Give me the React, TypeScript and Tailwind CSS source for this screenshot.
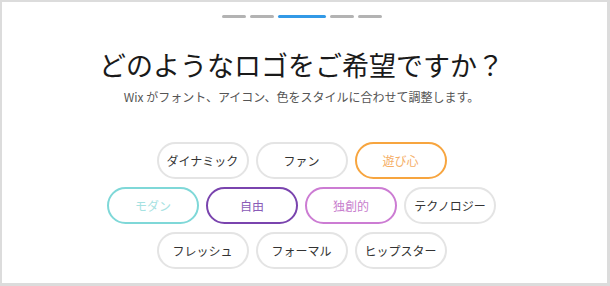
import React from "react";

type Tag = { label: string; cls: string };

const rows: Tag[][] = [
  [
    { label: "ダイナミック", cls: "border-[#e4e4e4] text-[#333333]" },
    { label: "ファン", cls: "border-[#e4e4e4] text-[#333333]" },
    { label: "遊び心", cls: "border-[#f7a53f] text-[#f5ae66]" },
  ],
  [
    { label: "モダン", cls: "border-[#7fd8d8] text-[#a6e2e2]" },
    { label: "自由", cls: "border-[#7a44ae] text-[#8a5bb7]" },
    { label: "独創的", cls: "border-[#cc7cd3] text-[#c77dcd]" },
    { label: "テクノロジー", cls: "border-[#e4e4e4] text-[#333333]" },
  ],
  [
    { label: "フレッシュ", cls: "border-[#e4e4e4] text-[#333333]" },
    { label: "フォーマル", cls: "border-[#e4e4e4] text-[#333333]" },
    { label: "ヒップスター", cls: "border-[#e4e4e4] text-[#333333]" },
  ],
];

const steps = ["w-6 bg-[#b3b3b3]", "w-6 bg-[#b3b3b3]", "w-12 bg-[#3299e6]", "w-6 bg-[#b3b3b3]", "w-6 bg-[#b3b3b3]"];

const App = () => {
  return (
    <div
      className="w-[610px] h-[286px] bg-white border-[#dcdcdc] border-t-2 border-l-2 border-r-[3px] border-b-[3px] pr-[6px] flex flex-col items-center"
      style={{ fontFamily: '"Noto Sans CJK JP", "Noto Sans", sans-serif' }}
    >
      {/* progress */}
      <div className="flex gap-1 mt-[13px]">
        {steps.map((s, i) => (
          <div key={i} className={`h-[3px] rounded-full ${s}`} />
        ))}
      </div>

      <h1 className="mt-[30px] text-[27px] leading-[34px] text-[#1a1a1a] font-normal">
        どのようなロゴをご希望ですか？
      </h1>
      <p className="mt-[7px] text-[12px] leading-[16px] text-[#555555]">
        Wix がフォント、アイコン、色をスタイルに合わせて調整します。
      </p>

      <div className="mt-[37px] flex flex-col items-center gap-2">
        {rows.map((row, r) => (
          <div key={r} className="flex gap-[7px]">
            {row.map((t) => (
              <button
                key={t.label}
                className={`w-[92px] h-[37px] rounded-full border-2 bg-white text-[12px] flex items-center justify-center ${t.cls}`}
              >
                {t.label}
              </button>
            ))}
          </div>
        ))}
      </div>
    </div>
  );
};

export default App;
